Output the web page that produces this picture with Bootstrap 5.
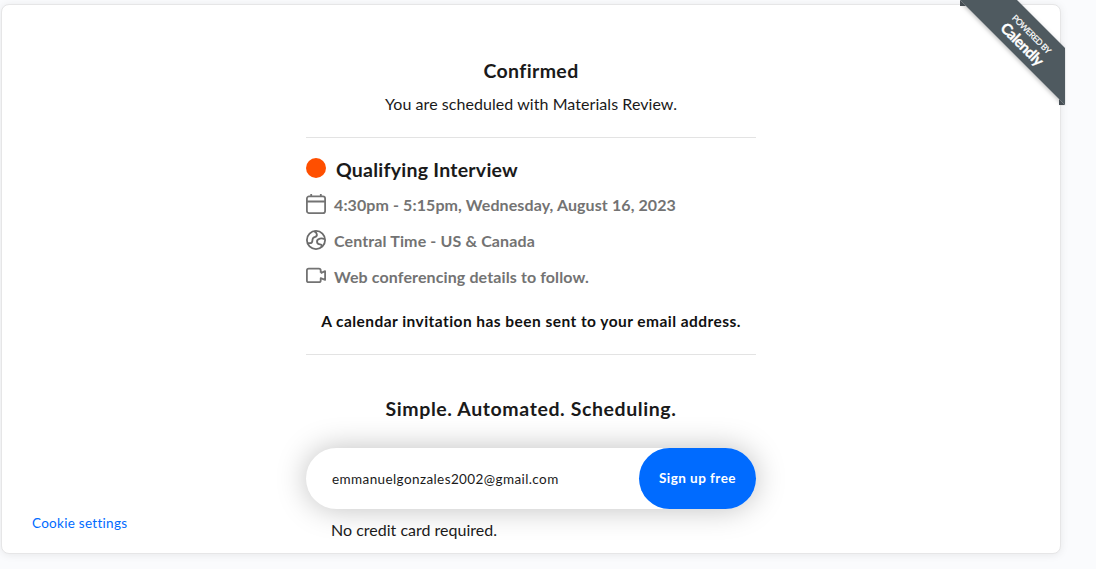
<!DOCTYPE html>
<html lang="en">
<head>
<meta charset="utf-8">
<meta name="viewport" content="width=device-width, initial-scale=1">
<title>Confirmed</title>
<link href="https://cdn.jsdelivr.net/npm/bootstrap@5.3.0/dist/css/bootstrap.min.css" rel="stylesheet">
<style>
body{font-family:Lato,"Liberation Sans",sans-serif;background:#fafbfd;color:#1a1a1a;height:569px;overflow:hidden;line-height:24px}
.booking{width:1060px;height:550px;margin:4px 0 0 1px;border:1px solid #e6e6e7;border-radius:8px;box-shadow:0 1px 8px rgba(0,0,0,.08);background:#fff}
.booking-body{width:450px;padding-top:54px}
.title{font-size:19.5px;font-weight:700;line-height:24px;margin:0}
.fit{display:inline-block;white-space:nowrap}
.rule{border:0;border-top:1px solid #e3e3e3;opacity:1;margin:0}
.intro{margin:9px 0 21px}
.event{margin-top:16px}
.event .title{padding:4px 0 0 2px}
.dot{width:20px;height:20px;background:#ff4f00}
.details{margin-top:12px}
.detail{color:#737373;font-size:16px;font-weight:700;height:36px}
.detail svg{width:20px;height:20px;flex:none}
.detail .fit{margin-top:-1px}
.sent{font-size:15.5px;margin:7px 0 21px;color:#111}
.promo{margin:42px 0 27px}
.signup{height:61px;border-radius:31px;box-shadow:0 0 30px rgba(0,0,0,.25);background:#fff}
.signup input{font-size:13.5px;letter-spacing:.4px;padding:1px 0 0 26px;color:#1a1a1a;background:transparent}
.signup .btn{width:117px;border-radius:31px;background:#006bff;font-size:13.5px;font-weight:700}
.note{padding:9px 0 0 25px}
.cookie{left:30px;bottom:18px;font-size:13.5px;color:#006bff}
.ribbon{left:958px;top:-5px}
</style>
</head>
<body>
<main class="booking position-relative">
  <div class="booking-body mx-auto">
    <h1 class="title text-center"><span class="fit" data-w="95">Confirmed</span></h1>
    <p class="intro text-center"><span class="fit" data-w="292">You are scheduled with Materials Review.</span></p>
    <hr class="rule">
    <div class="event d-flex align-items-center">
      <span class="dot rounded-circle"></span>
      <h2 class="title ms-2"><span class="fit" data-w="182">Qualifying Interview</span></h2>
    </div>
    <div class="details">
      <div class="detail d-flex align-items-start gap-2"><svg viewBox="0 0 20 20" fill="none" stroke="#737373" stroke-width="1.8"><rect x=".9" y="2.4" width="18.2" height="16.7" rx="2.2"/><path d="M1 7.5h18M5.2 0v3M14.8 0v3"/></svg><span class="fit" data-w="342">4:30pm - 5:15pm, Wednesday, August 16, 2023</span></div>
      <div class="detail d-flex align-items-start gap-2"><svg viewBox="0 0 20 20" fill="none" stroke="#6b6b6b" stroke-width="1.8" stroke-linejoin="round"><circle cx="10" cy="10" r="9.1"/><path d="M1.3 13.2h2.500c2 0 2.600-1.200 2.600-2.800 0-2 .5-2.800 2.200-3.300 1.800-.5 2.600-1.400 2.200-3C10.500 2.500 9.500 2 8.200 1.200M18.700 9.200c-1.500-.7-3.200-1-4.800-.6-2 .5-3.200 2-2.800 3.700.3 1.400 1.400 2 2.900 2 1.300 0 1.700.7 1.500 1.900l-.3 1.300"/></svg><span class="fit" data-w="201">Central Time - US &amp; Canada</span></div>
      <div class="detail d-flex align-items-start gap-2"><svg viewBox="0 0 20 20" fill="none" stroke="#737373" stroke-width="1.8" stroke-linejoin="round"><path d="M14.7 6.800V4.400a1.800 1.800 0 0 0-1.800-1.800H2.700A1.800 1.800 0 0 0 .9 4.400v10a1.800 1.800 0 0 0 1.800 1.800h10.200a1.800 1.800 0 0 0 1.800-1.800V12.200l4.400 1.700V5.200l-4.400 1.900"/></svg><span class="fit" data-w="255">Web conferencing details to follow.</span></div>
    </div>
    <p class="sent text-center fw-bold"><span class="fit" data-w="420">A calendar invitation has been sent to your email address.</span></p>
    <hr class="rule">
    <h2 class="promo title text-center"><span class="fit" data-w="291">Simple. Automated. Scheduling.</span></h2>
    <form class="signup d-flex">
      <input class="border-0 flex-grow-1 rounded-pill" type="text" aria-label="Email" value="emmanuelgonzales2002@gmail.com">
      <button class="btn text-white border-0 p-0" type="button"><span class="fit" data-w="77">Sign up free</span></button>
    </form>
    <p class="note mb-0"><span class="fit" data-w="166">No credit card required.</span></p>
  </div>
  <a class="cookie position-absolute text-decoration-none" href="#"><span class="fit" data-w="95">Cookie settings</span></a>
  <svg class="ribbon position-absolute" width="106" height="106" viewBox="0 0 106 106">
    <defs><filter id="shade" x="-10%" y="-10%" width="120%" height="120%"><feDropShadow dx="-1" dy="1" stdDeviation="2" flood-opacity=".25"/></filter></defs>
    <path d="M0 0H57L105 48V105Z" fill="#505a61" filter="url(#shade)"/>
    <path d="M0 0v6H6zM99 99v6h6z" fill="#464e54"/>
    <g fill="#fff" font-family="Lato" text-anchor="middle">
      <text transform="translate(69.5 36.5) rotate(45)" font-size="8.5" textLength="51" stroke="#fff" stroke-width=".2">POWERED BY</text>
      <text transform="translate(58.5 48) rotate(45)" font-size="15" font-weight="700" textLength="54" stroke="#fff" stroke-width=".3">Calendly</text>
    </g>
  </svg>
</main>
<script src="https://cdn.jsdelivr.net/npm/bootstrap@5.3.0/dist/js/bootstrap.bundle.min.js"></script>
<script>
// Track each label to its intended line width.
document.querySelectorAll('.fit').forEach(el => {
  const space = (el.dataset.w - el.getBoundingClientRect().width) / el.textContent.length;
  el.style.letterSpacing = space + 'px';
});
</script>
</body>
</html>
